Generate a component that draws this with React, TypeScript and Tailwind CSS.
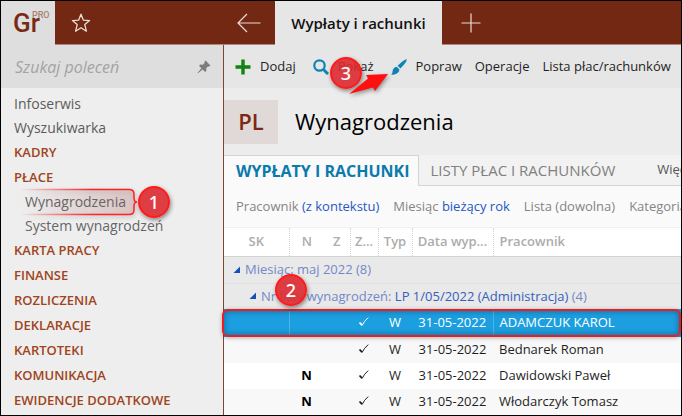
import clsx from "clsx";

type MenuItem = { label: string; level: "link" | "group" | "sub"; marked?: boolean };

const menu: MenuItem[] = [
  { label: "Infoserwis", level: "link" },
  { label: "Wyszukiwarka", level: "link" },
  { label: "KADRY", level: "group" },
  { label: "PŁACE", level: "group" },
  { label: "Wynagrodzenia", level: "sub", marked: true },
  { label: "System wynagrodzeń", level: "sub" },
  { label: "KARTA PRACY", level: "group" },
  { label: "FINANSE", level: "group" },
  { label: "ROZLICZENIA", level: "group" },
  { label: "DEKLARACJE", level: "group" },
  { label: "KARTOTEKI", level: "group" },
  { label: "KOMUNIKACJA", level: "group" },
  { label: "EWIDENCJE DODATKOWE", level: "group" },
];

const rows = [
  { n: "", date: "31-05-2022", name: "ADAMCZUK KAROL", selected: true },
  { n: "", date: "31-05-2022", name: "Bednarek Roman" },
  { n: "N", date: "31-05-2022", name: "Dawidowski Paweł" },
  { n: "N", date: "31-05-2022", name: "Włodarczyk Tomasz" },
];

function Badge({ value, className }: { value: number; className: string }) {
  return (
    <span
      className={clsx(
        "absolute z-20 flex size-8 items-center justify-center rounded-full border-2 border-[#ff1a1a] bg-[#dc2a30]/90 font-['Noto_Sans'] text-lg leading-none font-medium text-white shadow-[1px_2px_4px_rgba(0,0,0,0.45)]",
        className
      )}
    >
      {value}
    </span>
  );
}

function Check() {
  return (
    <svg viewBox="0 0 12 12" className="mx-auto size-3" fill="none" stroke="currentColor">
      <path d="M1.500 5.500 4 8.200" strokeWidth="1.800" />
      <path d="M4 8.600Q6.200 4 10.200.6" strokeWidth="1" />
    </svg>
  );
}

function Triangle() {
  return (
    <svg viewBox="0 0 8 8" className="size-2 shrink-0" fill="#1450b8">
      <path d="M7 .5V7H.5z" />
    </svg>
  );
}

function Sidebar() {
  return (
    <aside className="flex w-[223px] shrink-0 flex-col border-r border-[#7d4634] bg-[#eeeeee]">
      <div className="flex h-[43px] items-center bg-[#dedede] pr-3 pl-3.5">
        <input
          type="text"
          aria-label="Szukaj poleceń"
          placeholder="Szukaj poleceń"
          className="w-0 min-w-0 flex-1 text-base italic outline-none placeholder:text-[#a3a3a3]"
        />
        <button aria-label="Przypnij">
          <svg viewBox="0 0 14 14" className="size-3.5" fill="#7c7c7c">
            <path d="M8.600.6 13.400 5.400 12.400 6.600 11 6.400 9.200 8.200 9.400 10.800 8.200 12 5.600 9.400 1 13.200.6 12.800 4.400 8.200 2 5.800 3.200 4.600 5.800 4.800 7.600 3 7.400 1.800z" />
          </svg>
        </button>
      </div>
      <nav className="flex flex-col pt-1 pl-[13px]">
        {menu.map((item) => (
          <a
            key={item.label}
            href="#"
            className={clsx(
              "relative flex items-center whitespace-nowrap",
              item.level === "group" && "h-[25px] text-[13px] font-semibold text-[#a04420]",
              item.level === "link" && "h-6 text-sm text-[#5c5c5c]",
              item.level === "sub" && "h-6 pl-[11px] text-sm text-[#666666]"
            )}
          >
            {item.marked && (
              <>
                <svg
                  viewBox="0 0 120 28"
                  className="absolute -top-0.5 left-1.5 h-7 w-[120px] drop-shadow-[1px_2px_2px_rgba(0,0,0,0.25)]"
                  fill="none"
                >
                  <defs>
                    <linearGradient id="line" x1="0" x2="120" y1="0" y2="0" gradientUnits="userSpaceOnUse">
                      <stop stopColor="#f22" stopOpacity="0" />
                      <stop offset=".6" stopColor="#f22" />
                    </linearGradient>
                    <linearGradient id="wash" x1="0" x2="120" y1="0" y2="0" gradientUnits="userSpaceOnUse">
                      <stop stopColor="#c66" stopOpacity="0" />
                      <stop offset="1" stopColor="#c66" stopOpacity=".25" />
                    </linearGradient>
                  </defs>
                  <path
                    d="M0 1.500H109Q114 1.500 114 6V10Q114 14 117 14Q114 14 114 18V22Q114 26.500 109 26.500H0"
                    fill="url(#wash)"
                    stroke="url(#line)"
                    strokeWidth="1.500"
                  />
                </svg>
                <Badge value={1} className="-top-1 left-[124px]" />
              </>
            )}
            <span className="relative">{item.label}</span>
          </a>
        ))}
      </nav>
    </aside>
  );
}

function TitleBar() {
  return (
    <header className="flex h-11 shrink-0 border-b border-[#a98a80] bg-[#722813] text-[#ecdcd8]">
      <div className="-mb-px flex w-[54px] bg-[#dedede] pt-2 pl-3 font-['Roboto'] text-[#7a2a14]">
        <span className="text-[26px] leading-7 font-medium">Gr</span>
        <span className="-ml-2 text-[9px] leading-3 font-medium text-[#a8806f]">PRO</span>
      </div>
      <button aria-label="Ulubione" className="ml-4">
        <svg viewBox="0 0 20 20" className="size-5" fill="none" stroke="currentColor" strokeWidth="1.300" strokeLinejoin="round">
          <path d="M10 1.200 12.400 7.200 18.600 7.600 13.800 11.600 15.400 18.200 10 14.700 4.600 18.200 6.200 11.600 1.400 7.600 7.600 7.200z" />
        </svg>
      </button>
      <button aria-label="Wstecz" className="ml-[146px]">
        <svg viewBox="0 0 24 20" className="h-5 w-6" fill="none" stroke="currentColor" strokeWidth="1.200">
          <path d="M23.500 10H1M10 1 1 10l9 9" />
        </svg>
      </button>
      <button className="-mb-px ml-3.5 w-[167px] bg-[#e6e6e6] text-[15px] font-semibold whitespace-nowrap text-[#111111]">
        Wypłaty i rachunki
      </button>
      <button aria-label="Nowa karta" className="ml-[19px]">
        <svg viewBox="0 0 20 20" className="size-5" fill="none" stroke="currentColor" strokeWidth="1.200">
          <path d="M10 .5v19M.5 10h19" />
        </svg>
      </button>
    </header>
  );
}

function Toolbar() {
  return (
    <div className="relative flex h-[43px] shrink-0 items-center gap-[17px] bg-[#e6e6e6] pl-[11px] text-[13px] whitespace-nowrap text-[#1f1f1f]">
      <button className="flex items-center gap-[9px]">
        <svg viewBox="0 0 16 16" className="size-4" stroke="#128212" strokeWidth="3.400">
          <path d="M8 .5v15M.5 8h15" />
        </svg>
        Dodaj
      </button>
      <button className="flex items-center gap-[9px]">
        <svg viewBox="0 0 16 16" className="size-4" fill="none" stroke="#0d84b4">
          <circle cx="6.500" cy="6.500" r="5.200" strokeWidth="2.200" />
          <path d="m10.500 10.500 4.500 4.500" strokeWidth="3" />
        </svg>
        Pokaż
      </button>
      <button className="flex items-center gap-[9px]">
        <svg viewBox="0 0 16 16" className="size-4" fill="#0d84b4">
          <path d="M15.800.2Q15.900 3 9.400 9.400L6.600 6.800Q12.800.6 15.800.2z" />
          <path d="M5.700 7.700 8.500 10.400Q8.300 13.500 5.500 14.800 3 15.800.2 15.600 1.700 14.500 1.600 12 2 8.600 5.700 7.700z" />
        </svg>
        Popraw
      </button>
      <button className="-ml-1">Operacje</button>
      <button className="-ml-1">Lista płac/rachunków</button>

      <Badge value={3} className="top-3 left-[106px]" />
      <svg
        viewBox="0 0 40 22"
        className="absolute top-7 left-[125px] z-20 h-[22px] w-10 drop-shadow-[1px_2px_2px_rgba(0,0,0,0.4)]"
        fill="#ff1010"
      >
        <path d="M0 21 19 5.500 17 2 39 1 26 18 24 14.500z" />
      </svg>
    </div>
  );
}

function Filter({ name, value }: { name: string; value?: string }) {
  return (
    <button>
      {name}
      {value && <span className="text-[#2458c4]"> {value}</span>}
    </button>
  );
}

function PayTable() {
  return (
    <table className="w-full table-fixed border-collapse text-[13px] whitespace-nowrap text-[#1f1f1f]">
      <colgroup>
        <col className="w-[65px]" />
        <col className="w-[35px]" />
        <col className="w-[26px]" />
        <col className="w-[28px]" />
        <col className="w-[34px]" />
        <col className="w-[81px]" />
        <col />
      </colgroup>
      <thead>
        <tr className="h-7 border-b border-[#d4d4d4] bg-white text-[#acacac] *:p-0 *:font-semibold">
          <th className="border-r border-dotted border-r-[#d4d4d4]">SK</th>
          <th>N</th>
          <th>Z</th>
          <th className="border-x border-dotted border-x-[#d4d4d4]">Z...</th>
          <th className="border-r border-dotted border-r-[#d4d4d4]">Typ</th>
          <th className="border-r border-dotted border-r-[#d4d4d4]">Data wyp...</th>
          <th>
            <div className="pl-1.5 text-left">Pracownik</div>
          </th>
        </tr>
      </thead>
      <tbody>
        <tr className="h-[27px] border-b border-[#e0e0e0] bg-[#e9e9e9] text-[#7488c8]">
          <td colSpan={7} className="p-0">
            <div className="flex items-center gap-1 pl-[9px]">
              <Triangle />
              Miesiąc: maj 2022 (8)
            </div>
          </td>
        </tr>
        <tr className="h-[26px] bg-[#e9e9e9] text-[#7488c8]">
          <td colSpan={7} className="relative p-0">
            <div className="flex items-center gap-1 pl-[25px]">
              <Triangle />
              <span>
                Nr listy wynagrodzeń: <span className="text-[#3560bc]">LP 1/05/2022 (Administracja)</span> (4)
              </span>
            </div>
            <Badge value={2} className="-top-2.5 left-[51px]" />
          </td>
        </tr>
        {rows.map((row) => (
          <tr
            key={row.name}
            className={clsx(
              "text-center *:p-0",
              row.selected
                ? "relative h-7 bg-[#1c9fe0] text-white"
                : "h-[26px] odd:bg-white even:bg-[#f8f8f8]"
            )}
          >
            <td className={clsx(row.selected && "border-r border-[#4db4e6]")} />
            <td className="font-bold text-black">{row.n}</td>
            <td />
            <td>
              <Check />
            </td>
            <td>W</td>
            <td className={clsx(row.selected && "border-r border-[#4db4e6]")}>{row.date}</td>
            <td>
              <div className="pl-1.5 text-left">{row.name}</div>
              {row.selected && (
                <span className="absolute inset-y-0 right-0 -left-0.5 rounded-md border-2 border-[#ec1c24] shadow-[inset_0_0_6px_rgba(0,30,60,0.45),0_1px_4px_rgba(0,0,0,0.3)]" />
              )}
            </td>
          </tr>
        ))}
      </tbody>
    </table>
  );
}

export default function App() {
  return (
    <div className="flex min-h-screen flex-col overflow-hidden border border-black bg-[#ececec] font-['Open_Sans',sans-serif]">
      <TitleBar />
      <div className="flex flex-1">
        <Sidebar />
        <main className="flex min-w-0 flex-1 flex-col">
          <Toolbar />
          <div className="flex h-[67px] items-center gap-[17px]">
            <div className="flex h-11 w-[54px] items-center justify-center bg-[#e1d9d7] text-[22px] font-semibold text-[#7a2a14]">
              PL
            </div>
            <h1 className="text-[22px] text-black">Wynagrodzenia</h1>
          </div>
          <div className="flex h-[31px] overflow-hidden bg-[#f2f2f2] text-base whitespace-nowrap">
            <button className="border-t border-r border-[#d4d4d4] bg-[#fafafa] pr-2 pl-3 font-bold text-[#0a7bab]">
              WYPŁATY I RACHUNKI
            </button>
            <div className="flex flex-1 border-b border-[#d4d4d4]">
              <button className="pl-3 text-[15px] text-[#808080]">LISTY PŁAC I RACHUNKÓW</button>
              <button className="ml-[42px] text-[13px] text-[#555555]">Więcej</button>
            </div>
          </div>
          <div className="flex h-[42px] gap-3.5 overflow-hidden border-b border-[#f0f0f0] bg-[#fafafa] pl-3 text-[13px] whitespace-nowrap text-[#858585]">
            <Filter name="Pracownik" value="(z kontekstu)" />
            <Filter name="Miesiąc" value="bieżący rok" />
            <Filter name="Lista (dowolna)" />
            <Filter name="Kategoria" />
          </div>
          <PayTable />
        </main>
      </div>
    </div>
  );
}
